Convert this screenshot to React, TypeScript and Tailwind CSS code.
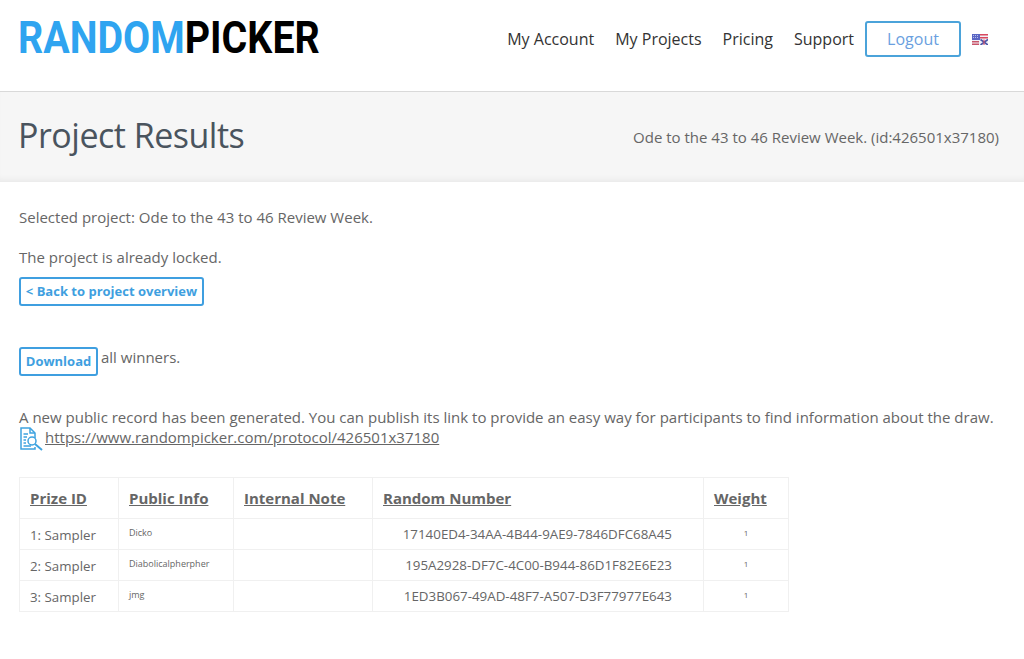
import React from 'react';

const rows = [
    { id: '1: Sampler', info: 'Dicko', num: '17140ED4-34AA-4B44-9AE9-7846DFC68A45' },
    { id: '2: Sampler', info: 'Diabolicalpherpher', num: '195A2928-DF7C-4C00-B944-86D1F82E6E23' },
    { id: '3: Sampler', info: 'jmg', num: '1ED3B067-49AD-48F7-A507-D3F77977E643' },
];

function Flag() {
    return (
        <svg width="16" height="11" viewBox="0 0 16 11" className="block">
            <rect width="16" height="11" fill="#f0f0f6" />
            <rect x="8" y="0" width="8" height="1.5" fill="#d9485f" />
            <rect x="8" y="3" width="8" height="1.5" fill="#d9485f" />
            <rect y="7" width="7" height="1.5" fill="#c9566a" />
            <rect y="9.5" width="7" height="1.5" fill="#c9566a" />
            <rect width="8" height="6" fill="#5a66c4" />
            <path d="M1 1.5 H7 M1 3.5 H7" stroke="#dfe3fa" strokeWidth="0.7" strokeDasharray="1 1" />
            <path d="M8.5 5.5 L16 11 M16 5.5 L8.5 11" stroke="#4a55a8" strokeWidth="1.6" />
            <path d="M12 5.5 V11" stroke="#d9485f" strokeWidth="1" />
        </svg>
    );
}

function DocIcon() {
    return (
        <svg width="24" height="24" viewBox="0 0 24 24" fill="none" stroke="#3ea3e0" strokeWidth="1.5" className="block shrink-0">
            <path d="M16 11 V6 L11 1 H2 V22 H16 V20" />
            <path d="M11 1 V6 H16" />
            <path d="M4.5 7 H9 M4.5 10 H8 M4.5 13 H7 M4.5 16 H7 M4.5 19 H12" />
            <circle cx="13" cy="14" r="4" />
            <path d="M16 17 L23 23" strokeWidth="2" />
        </svg>
    );
}

export default function App() {
    return (
        <main className="min-h-[659px] bg-white font-['Open_Sans',sans-serif] text-[15px] text-[#666666]">
            {/* header */}
            <header className="h-[92px] flex items-start justify-between border-b border-[#d9d9d9] pl-[18px] pr-[36px]">
                <div className="mt-[13px] origin-left scale-x-[0.895] font-['Roboto',sans-serif] font-bold text-[44px] leading-[50px] text-black">
                    <span className="text-[#2fa4f0]">RANDOM</span>PICKER
                </div>
                <nav className="mt-[21px] flex items-center text-[16px] text-[#333333]">
                    <a className="mr-[21px]">My Account</a>
                    <a className="mr-[21px]">My Projects</a>
                    <a className="mr-[21px]">Pricing</a>
                    <a className="mr-[11px]">Support</a>
                    <a className="w-[96px] h-[36px] mr-[11px] flex items-center justify-center rounded-[3px] border-2 border-[#4ba3da] text-[#6a9fe0]">
                        Logout
                    </a>
                    <Flag />
                </nav>
            </header>

            {/* title band */}
            <section className="h-[90px] flex items-center justify-between bg-[#f6f6f6] shadow-[inset_0_-6px_6px_-4px_rgba(0,0,0,0.06)] pl-[18px] pr-[25px]">
                <h1 className="mb-[4px] text-[34px] leading-[44px] tracking-[-0.5px] text-[#4a545e]">Project Results</h1>
                <p className="text-[#666666]">Ode to the 43 to 46 Review Week. (id:426501x37180)</p>
            </section>

            <section className="pl-[19px] pr-[19px] pt-[25px] leading-[20px]">
                <p>Selected project: Ode to the 43 to 46 Review Week.</p>
                <p className="mt-[20px]">The project is already locked.</p>
                <a className="mt-[10px] w-[185px] h-[29px] pb-[2px] flex items-center justify-center rounded-[3px] border-2 border-[#3f9fe0] text-[13px] font-bold text-[#3f9fe0]">
                    &lt; Back to project overview
                </a>
                <div className="mt-[41px] flex items-start">
                    <a className="w-[79px] h-[29px] pb-[2px] flex items-center justify-center rounded-[3px] border-2 border-[#3f9fe0] text-[13px] font-bold text-[#3f9fe0]">
                        Download
                    </a>
                    <span className="ml-[3px]">all winners.</span>
                </div>
                <p className="mt-[31px] whitespace-nowrap">
                    A new public record has been generated. You can publish its link to provide an easy way for participants to find information about the draw.
                </p>
                <div className="flex items-start h-[20px]">
                    <DocIcon />
                    <a className="ml-[2px] underline">https://www.randompicker.com/protocol/426501x37180</a>
                </div>

                {/* results table */}
                <table className="mt-[30px] w-[770px] table-fixed border-collapse">
                    <colgroup>
                        <col className="w-[99px]" />
                        <col className="w-[115px]" />
                        <col className="w-[139px]" />
                        <col className="w-[331px]" />
                        <col className="w-[85px]" />
                    </colgroup>
                    <thead>
                        <tr className="h-[41px] text-left text-[15px] font-bold underline">
                            <th className="border border-[#f0f0f0] pl-[10px]">Prize ID</th>
                            <th className="border border-[#f0f0f0] pl-[10px]">Public Info</th>
                            <th className="border border-[#f0f0f0] pl-[10px]">Internal Note</th>
                            <th className="border border-[#f0f0f0] pl-[10px]">Random Number</th>
                            <th className="border border-[#f0f0f0] pl-[10px]">Weight</th>
                        </tr>
                    </thead>
                    <tbody>
                        {rows.map((r) => (
                            <tr key={r.id} className="h-[31px]">
                                <td className="border border-[#f0f0f0] pl-[10px] text-[13.3px] pt-[2px]">{r.id}</td>
                                <td className="border border-[#f0f0f0] pl-[10px] text-[9px] pb-[2px]">{r.info}</td>
                                <td className="border border-[#f0f0f0]"></td>
                                <td className="border border-[#f0f0f0] pr-[31px] text-right text-[13.35px]">{r.num}</td>
                                <td className="border border-[#f0f0f0] text-center text-[8px] pb-[2px]">1</td>
                            </tr>
                        ))}
                    </tbody>
                </table>
            </section>
        </main>
    );
}
